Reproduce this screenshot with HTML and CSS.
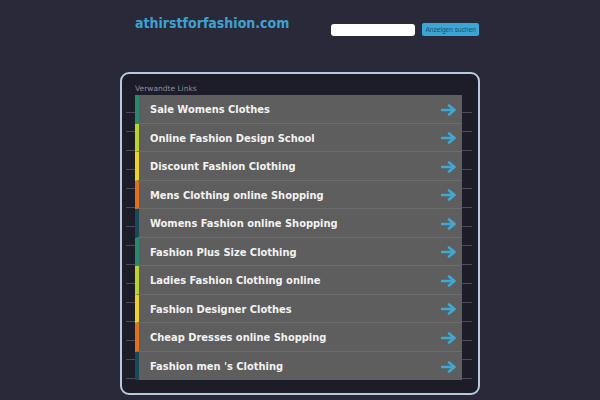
FILE: index.html
```html
<!DOCTYPE html>
<html>
<head>
<meta charset="utf-8">
<link rel="stylesheet" href="styles.css">
</head>
<body>
<div class="page">
  <header class="header">
    <div class="logo">athirstforfashion.com</div>
    <form class="search">
      <input class="search-input" type="text">
      <button class="search-btn" type="button">Anzeigen suchen</button>
    </form>
  </header>
  <section class="box">
    <div class="box-title">Verwandte Links</div>
    <ul class="links">
      <li class="link c1"><span>Sale Womens Clothes</span><svg class="arrow" viewBox="0 0 16 12"><path d="M1 6H13M8 1.5L13.5 6L8 10.5" fill="none" stroke="#3fa9d4" stroke-width="2.6" stroke-linecap="round" stroke-linejoin="round"/></svg></li>
      <li class="link c2"><span>Online Fashion Design School</span><svg class="arrow" viewBox="0 0 16 12"><path d="M1 6H13M8 1.5L13.5 6L8 10.5" fill="none" stroke="#3fa9d4" stroke-width="2.6" stroke-linecap="round" stroke-linejoin="round"/></svg></li>
      <li class="link c3"><span>Discount Fashion Clothing</span><svg class="arrow" viewBox="0 0 16 12"><path d="M1 6H13M8 1.5L13.5 6L8 10.5" fill="none" stroke="#3fa9d4" stroke-width="2.6" stroke-linecap="round" stroke-linejoin="round"/></svg></li>
      <li class="link c4"><span>Mens Clothing online Shopping</span><svg class="arrow" viewBox="0 0 16 12"><path d="M1 6H13M8 1.5L13.5 6L8 10.5" fill="none" stroke="#3fa9d4" stroke-width="2.6" stroke-linecap="round" stroke-linejoin="round"/></svg></li>
      <li class="link c5"><span>Womens Fashion online Shopping</span><svg class="arrow" viewBox="0 0 16 12"><path d="M1 6H13M8 1.5L13.5 6L8 10.5" fill="none" stroke="#3fa9d4" stroke-width="2.6" stroke-linecap="round" stroke-linejoin="round"/></svg></li>
      <li class="link c1"><span>Fashion Plus Size Clothing</span><svg class="arrow" viewBox="0 0 16 12"><path d="M1 6H13M8 1.5L13.5 6L8 10.5" fill="none" stroke="#3fa9d4" stroke-width="2.6" stroke-linecap="round" stroke-linejoin="round"/></svg></li>
      <li class="link c2"><span>Ladies Fashion Clothing online</span><svg class="arrow" viewBox="0 0 16 12"><path d="M1 6H13M8 1.5L13.5 6L8 10.5" fill="none" stroke="#3fa9d4" stroke-width="2.6" stroke-linecap="round" stroke-linejoin="round"/></svg></li>
      <li class="link c3"><span>Fashion Designer Clothes</span><svg class="arrow" viewBox="0 0 16 12"><path d="M1 6H13M8 1.5L13.5 6L8 10.5" fill="none" stroke="#3fa9d4" stroke-width="2.6" stroke-linecap="round" stroke-linejoin="round"/></svg></li>
      <li class="link c4"><span>Cheap Dresses online Shopping</span><svg class="arrow" viewBox="0 0 16 12"><path d="M1 6H13M8 1.5L13.5 6L8 10.5" fill="none" stroke="#3fa9d4" stroke-width="2.6" stroke-linecap="round" stroke-linejoin="round"/></svg></li>
      <li class="link c5"><span>Fashion men 's Clothing</span><svg class="arrow" viewBox="0 0 16 12"><path d="M1 6H13M8 1.5L13.5 6L8 10.5" fill="none" stroke="#3fa9d4" stroke-width="2.6" stroke-linecap="round" stroke-linejoin="round"/></svg></li>
    </ul>
  </section>
</div>
</body>
</html>
```
FILE: styles.css
```css
html, body {
  margin: 0;
  padding: 0;
  background: #2a2939;
  font-family: "DejaVu Sans", Verdana, sans-serif;
}
.page {
  width: 360px;
  margin: 0 auto;
}
.header {
  display: flex;
  justify-content: space-between;
  align-items: flex-start;
  height: 72px;
  padding: 0 1px 0 15px;
}
.logo {
  margin-top: 15px;
  font-family: "DejaVu Sans Condensed", "DejaVu Sans", sans-serif;
  font-stretch: condensed;
  font-size: 14px;
  font-weight: bold;
  color: #3ca2d2;
}
.search {
  display: flex;
  gap: 7px;
  margin-top: 23px;
}
.search-input {
  width: 84px;
  height: 12px;
  margin-top: 1px;
  padding: 0;
  border: none;
  border-radius: 3px;
  background: #fff;
}
.search-btn {
  height: 13px;
  padding: 0 3px;
  border: none;
  border-radius: 2px;
  background: #3aa6d6;
  color: #1c4f70;
  font-family: "Liberation Sans", Arial, sans-serif;
  font-size: 6.6px;
  line-height: 13px;
}
.box {
  height: 323px;
  box-sizing: border-box;
  border: 2px solid #b7cbdd;
  border-radius: 9px;
  background-color: #1d1c29;
  background-image: repeating-linear-gradient(to bottom, transparent 0, transparent 18px, #4b4a58 18px, #4b4a58 19px);
  background-position: 4px 20px;
  background-size: 346px 300px;
  background-repeat: no-repeat;
  padding: 10px 16px 0 13px;
}
.box-title {
  font-size: 7.5px;
  color: #8c8c98;
  height: 11px;
  line-height: 9px;
}
.links {
  list-style: none;
  margin: 0;
  padding: 0;
}
.link {
  display: flex;
  align-items: center;
  justify-content: space-between;
  height: 28.5px;
  box-sizing: border-box;
  background: #5e5e5e;
  border-bottom: 1px solid #6b6b6b;
  border-left: 4px solid #2a8a6c;
  padding: 2px 5px 0 11px;
  color: #f2f2f2;
  font-family: "DejaVu Sans Condensed", "DejaVu Sans", sans-serif;
  font-stretch: condensed;
  font-size: 11px;
  font-weight: bold;
}
.link:last-child {
  border-bottom: none;
}
.link.c1 { border-left-color: #278a6e; }
.link.c2 { border-left-color: #bcd32f; }
.link.c3 { border-left-color: #ecd226; }
.link.c4 { border-left-color: #e0701e; }
.link.c5 { border-left-color: #17495a; }
.arrow {
  width: 16px;
  height: 12px;
}
```
